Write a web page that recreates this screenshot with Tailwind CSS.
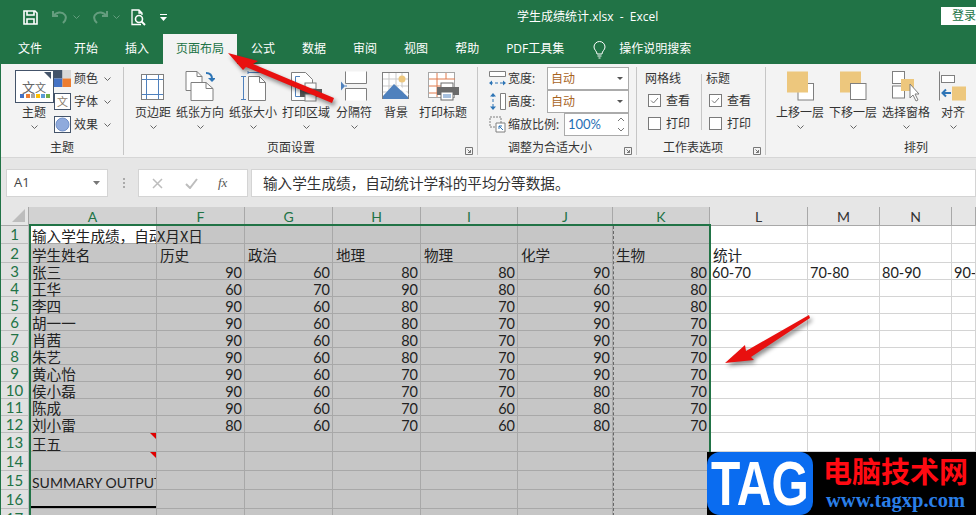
<!DOCTYPE html>
<html>
<head>
<meta charset="utf-8">
<title>学生成绩统计.xlsx - Excel</title>
<script src="https://cdn.jsdelivr.net/npm/@tailwindcss/browser@4"></script>
</head>
<body class="overflow-hidden">
<div class="relative w-[976px] h-[515px] overflow-hidden border-l border-[#217346] bg-white text-[12px] text-[#333] font-['Open_Sans','Noto_Sans_CJK_SC',sans-serif]">

  <!-- title bar -->
  <div class="relative flex items-center h-[34px] bg-[#217346] text-white">
    <svg class="ml-[22px]" width="15" height="15" viewBox="0 0 15 15" fill="none" stroke="#fff" stroke-width="1.6"><path d="M1 1h11l2 2v11H1z"/><path d="M4 1v4h7V1M4 14V9h7v5"/></svg>
    <svg class="ml-[14px] opacity-30" width="16" height="14" viewBox="0 0 16 14" fill="none" stroke="#fff" stroke-width="2"><path d="M1 1v5h5M1.5 6C4 2 10 1 13 5c2 3 0 6-2 8"/></svg>
    <svg class="ml-[5px] opacity-30" width="7" height="4" viewBox="0 0 7 4" fill="none" stroke="#fff"><path d="M.5.5l3 3 3-3"/></svg>
    <svg class="ml-[12px] opacity-30" width="16" height="14" viewBox="0 0 16 14" fill="none" stroke="#fff" stroke-width="2"><path d="M15 1v5h-5M14.500 6C12 2 6 1 3 5c-2 3 0 6 2 8"/></svg>
    <svg class="ml-[5px] opacity-30" width="7" height="4" viewBox="0 0 7 4" fill="none" stroke="#fff"><path d="M.5.5l3 3 3-3"/></svg>
    <svg class="ml-[11px]" width="16" height="17" viewBox="0 0 16 17" fill="none" stroke="#fff" stroke-width="1.3"><path d="M10 15.500H1V1h7l3 3v2M8 1v3h3"/><circle cx="8" cy="10" r="3.500" stroke-width="1.600"/><path d="M10.500 12.500l3.500 3.500" stroke-width="2"/></svg>
    <svg class="ml-[13px]" width="7" height="7" viewBox="0 0 7 7" fill="#fff"><path d="M0 0h7v1H0zM0 3h7L3.500 7z"/></svg>
    <span class="absolute left-[516px] top-[9px] leading-[16px] whitespace-pre">学生成绩统计.xlsx  -  Excel</span>
    <span class="absolute left-[940px] top-[7px] w-[40px] h-[18px] bg-white text-[#217346] pl-[11px] leading-[18px]">登录</span>
  </div>

  <!-- tabs -->
  <div class="flex h-[30px] bg-[#217346] text-white leading-[30px]">
    <div class="ml-[4px] px-[13px]">文件</div>
    <div class="ml-[6px] px-[13px]">开始</div>
    <div class="ml-[1px] px-[13px]">插入</div>
    <div class="ml-[1px] px-[13px] bg-[#f3f3f3] text-[#217346]">页面布局</div>
    <div class="ml-[1px] px-[13px]">公式</div>
    <div class="ml-[1px] px-[13px]">数据</div>
    <div class="ml-[1px] px-[13px]">审阅</div>
    <div class="ml-[1px] px-[13px]">视图</div>
    <div class="ml-[1px] px-[13px]">帮助</div>
    <div class="ml-[1px] px-[13px]">PDF工具集</div>
    <svg class="ml-[16px] mt-[7px]" width="13" height="18" viewBox="0 0 13 18" fill="none" stroke="#fff"><path d="M4 13c0-3-3-4-3-7a5.500 5.500 0 0 1 11 0c0 3-3 4-3 7zM4.500 15h4M5.500 17h2"/></svg>
    <div class="ml-[13px]">操作说明搜索</div>
  </div>

  <!-- ribbon -->
  <div class="flex h-[94px] pt-[3px] pb-[2px] bg-[#f3f3f3] border-b border-[#d6d6d6]">

    <!-- 主题 -->
    <div class="flex flex-col w-[123px] border-r border-[#c6c6c6]">
      <div class="flex flex-1 pl-[13px]">
        <div class="flex flex-col items-center w-[40px]">
          <svg class="mt-[3px]" width="39" height="33" viewBox="0 0 39 33"><rect x=".5" y=".5" width="38" height="32" fill="#fff" stroke="#44546a"/><path d="M29 2h7v7z" fill="#44546a"/><text x="7" y="22" font-size="13" fill="#666" font-family="Noto Sans CJK SC">文</text><text x="20" y="22" font-size="11" fill="#666" font-family="Noto Sans CJK SC">文</text><rect x="5" y="24" width="4" height="4" fill="#4472c4"/><rect x="11" y="24" width="4" height="4" fill="#ed7d31"/><rect x="16" y="24" width="4" height="4" fill="#a5a5a5"/><rect x="21" y="24" width="4" height="4" fill="#ffc000"/><rect x="26" y="24" width="4" height="4" fill="#5b9bd5"/><rect x="31" y="24" width="4" height="4" fill="#70ad47"/></svg>
          <div class="mt-[2px] leading-[16px]">主题</div>
          <svg class="mt-[4px]" width="7" height="4" viewBox="0 0 7 4" fill="none" stroke="#666"><path d="M.5.5l3 3 3-3"/></svg>
        </div>
        <div class="flex flex-col">
          <div class="flex items-center h-[23px]">
            <svg width="17" height="17" viewBox="0 0 17 17"><rect width="8.500" height="8.500" fill="#44546a"/><rect x="8.500" width="8.500" height="8.500" fill="#d9d9d9"/><rect y="8.500" width="8.500" height="8.500" fill="#4472c4"/><rect x="8.500" y="8.500" width="8.500" height="8.500" fill="#ed7d31"/></svg>
            <span class="ml-[3px]">颜色</span>
            <svg class="ml-[6px]" width="7" height="4" viewBox="0 0 7 4" fill="none" stroke="#666"><path d="M.5.5l3 3 3-3"/></svg>
          </div>
          <div class="flex items-center h-[23px]">
            <svg width="17" height="17" viewBox="0 0 17 17"><rect x=".5" y=".5" width="16" height="16" fill="#fff" stroke="#44546a"/><text x="3" y="13" font-size="11" fill="#8a7a6a" font-family="Noto Sans CJK SC">文</text></svg>
            <span class="ml-[3px]">字体</span>
            <svg class="ml-[6px]" width="7" height="4" viewBox="0 0 7 4" fill="none" stroke="#666"><path d="M.5.5l3 3 3-3"/></svg>
          </div>
          <div class="flex items-center h-[23px]">
            <svg width="17" height="17" viewBox="0 0 17 17"><rect x=".5" y=".5" width="16" height="16" fill="#fff" stroke="#44546a"/><circle cx="8.500" cy="8.500" r="6.500" fill="#8faadc" stroke="#6f8fc9"/></svg>
            <span class="ml-[3px]">效果</span>
            <svg class="ml-[6px]" width="7" height="4" viewBox="0 0 7 4" fill="none" stroke="#666"><path d="M.5.5l3 3 3-3"/></svg>
          </div>
        </div>
      </div>
      <div class="text-center leading-[14px]">主题</div>
    </div>

    <!-- 页面设置 -->
    <div class="relative flex flex-col w-[354px] border-r border-[#c6c6c6]">
      <div class="flex flex-1 pl-[11px]">
        <div class="flex flex-col items-center w-[36px]">
          <svg class="mt-[2px] mb-[2px] h-[34px]" width="24" height="28" viewBox="0 0 24 28" fill="#fff"><rect x=".5" y="2.500" width="22" height="25" stroke="#7f7f7f"/><path d="M5.500 3v24M17.500 3v24M1 7.500h21M1 22.500h21" stroke="#4f81bd" fill="none"/></svg>
          <div class="leading-[16px] whitespace-nowrap">页边距</div>
          <svg class="mt-[4px]" width="7" height="4" viewBox="0 0 7 4" fill="none" stroke="#666"><path d="M.5.5l3 3 3-3"/></svg>
        </div>
        <div class="flex flex-col items-center w-[48px] ml-[5px]">
          <svg class="mt-[2px] mb-[2px] h-[34px]" width="30" height="30" viewBox="0 0 30 30" fill="#fff" stroke="#7f7f7f"><path d="M1 .5h11l5 5v14H1z"/><path d="M6 11.500h15l7 6v12H6z"/><path d="M21 11.500v6h7M12 .5v5h5" fill="none"/><path d="M21 2c4 0 6 2 6 6" fill="none" stroke="#2e75b6" stroke-width="2"/><path d="M23 7h8l-4 4z" fill="#2e75b6" stroke="none"/></svg>
          <div class="leading-[16px] whitespace-nowrap">纸张方向</div>
          <svg class="mt-[4px]" width="7" height="4" viewBox="0 0 7 4" fill="none" stroke="#666"><path d="M.5.5l3 3 3-3"/></svg>
        </div>
        <div class="flex flex-col items-center w-[48px] ml-[5px]">
          <svg class="mt-[2px] mb-[2px] h-[34px]" width="25" height="30" viewBox="0 0 25 30" fill="#fff"><path d="M7 1.500h18M2.500 5v24M0 5.500h5M0 28.500h5M7 0v3M24.500 0v3" stroke="#4f81bd" fill="none"/><path d="M7.500 5.500h11l6 6v18h-17z" stroke="#7f7f7f"/><path d="M18.500 5.500v6h6" stroke="#7f7f7f" fill="none"/></svg>
          <div class="leading-[16px] whitespace-nowrap">纸张大小</div>
          <svg class="mt-[4px]" width="7" height="4" viewBox="0 0 7 4" fill="none" stroke="#666"><path d="M.5.5l3 3 3-3"/></svg>
        </div>
        <div class="flex flex-col items-center w-[48px] ml-[5px]">
          <svg class="mt-[2px] mb-[2px] h-[34px]" width="31" height="30" viewBox="0 0 31 30" fill="#fff"><path d="M.5 1.500h14l7 7v21H.5z" stroke="#7f7f7f"/><path d="M9 5.500H4.500v20H9" stroke="#4f81bd" fill="none"/><rect x="14" y="12" width="11" height="6" stroke="#7f7f7f"/><path d="M9 18h22v8H9z" fill="#5a5a5a"/><rect x="14" y="23" width="11" height="7" stroke="#7f7f7f"/></svg>
          <div class="leading-[16px] whitespace-nowrap">打印区域</div>
          <svg class="mt-[4px]" width="7" height="4" viewBox="0 0 7 4" fill="none" stroke="#666"><path d="M.5.5l3 3 3-3"/></svg>
        </div>
        <div class="flex flex-col items-center w-[36px] ml-[6px]">
          <svg class="mt-[2px] mb-[2px] h-[34px]" width="26" height="29" viewBox="0 0 26 29" fill="#fff" stroke="#7f7f7f"><path d="M4.500 0v12h21V0M4.500 29V17h21v12"/><path d="M0 10l4 4.500L0 19z" fill="#4f81bd" stroke="none"/><path d="M4 14.500h2" stroke="#4f81bd"/></svg>
          <div class="leading-[16px] whitespace-nowrap">分隔符</div>
          <svg class="mt-[4px]" width="7" height="4" viewBox="0 0 7 4" fill="none" stroke="#666"><path d="M.5.5l3 3 3-3"/></svg>
        </div>
        <div class="flex flex-col items-center w-[24px] ml-[12px]">
          <svg class="mt-[2px] mb-[2px] h-[34px] shrink-0" width="28" height="28" viewBox="0 0 28 28"><rect x=".5" y=".5" width="26" height="26" fill="#fff" stroke="#7f7f7f"/><path d="M7 1v25M14 1v25M20 1v25M1 7h25M1 14h25M1 20h25" stroke="#c9c9c9"/><circle cx="20" cy="7" r="3.500" fill="#edc77d"/><path d="M1 24l11-12 14 13v2H1z" fill="#4f81bd"/><path d="M17 14l9 9" stroke="#fff" stroke-width="2"/></svg>
          <div class="leading-[16px] whitespace-nowrap">背景</div>
        </div>
        <div class="flex flex-col items-center w-[48px] ml-[11px]">
          <svg class="mt-[2px] mb-[2px] h-[34px]" width="31" height="28" viewBox="0 0 31 28"><rect x=".5" y=".5" width="26" height="25" fill="#fff" stroke="#a6a6a6"/><path d="M1 7h26M9 1v6M18 1v6M9 7v18M1 14h12M1 21h8" stroke="#e07b4c" fill="none"/><rect x="13" y="11" width="12" height="6" fill="#fff" stroke="#6b6b6b"/><rect x="9" y="15" width="22" height="8" fill="#6b6b6b"/><rect x="13" y="20" width="12" height="8" fill="#fff" stroke="#6b6b6b"/><path d="M15 23h8M15 25h8" stroke="#4f81bd"/></svg>
          <div class="leading-[16px] whitespace-nowrap">打印标题</div>
        </div>
      </div>
      <div class="text-center leading-[14px] pr-[19px]">页面设置</div>
      <svg class="absolute right-[4px] bottom-0" width="8" height="8" viewBox="0 0 8 8" fill="none" stroke="#777"><path d="M.5 7.500v-7h7v7zM2.500 2.500l3 3M5.500 3v2.500H3"/></svg>
    </div>

    <!-- 调整为合适大小 -->
    <div class="relative flex flex-col w-[159px] border-r border-[#c6c6c6]">
      <div class="flex-1 pl-[11px]">
        <div class="flex items-center h-[23px]">
          <svg width="17" height="17" viewBox="0 0 17 17" fill="none" stroke="#7f7f7f"><path d="M.5 1.500h16v5h-16z" fill="#fff"/><path d="M1 13h15" stroke="#2e75b6" stroke-dasharray="3 2"/><path d="M0 13l3-2.500v5zM17 13l-3-2.500v5z" fill="#2e75b6" stroke="none"/></svg>
          <span class="ml-[2px] w-[39px]">宽度:</span>
          <div class="flex items-center justify-between w-[82px] h-[23px] pl-[3px] pr-[5px] bg-white border border-[#ababab] text-[#a9651f]">自动<svg width="6" height="3" viewBox="0 0 6 3" fill="#555"><path d="M0 0h6L3 3z"/></svg></div>
        </div>
        <div class="flex items-center h-[23px]">
          <svg width="17" height="17" viewBox="0 0 17 17" fill="none" stroke="#7f7f7f"><path d="M11.500.5h5v16h-5z" fill="#fff"/><path d="M4 1v15" stroke="#2e75b6" stroke-dasharray="3 2"/><path d="M4 0l-3 3.500h6zM4 17l-3-3.500h6z" fill="#2e75b6" stroke="none"/></svg>
          <span class="ml-[2px] w-[39px]">高度:</span>
          <div class="flex items-center justify-between w-[82px] h-[23px] pl-[3px] pr-[5px] bg-white border border-[#ababab] text-[#a9651f]">自动<svg width="6" height="3" viewBox="0 0 6 3" fill="#555"><path d="M0 0h6L3 3z"/></svg></div>
        </div>
        <div class="flex items-center h-[23px]">
          <svg width="17" height="17" viewBox="0 0 17 17" fill="none" stroke="#7f7f7f"><path d="M1 1h11v10H1z" stroke-dasharray="2 1"/><path d="M7 7h9v9H7z" fill="#fff"/><path d="M14 14l-4-4M10 13v-3h3" stroke="#2e75b6"/></svg>
          <span class="ml-[2px] w-[56px] whitespace-nowrap">缩放比例:</span>
          <div class="flex items-center justify-between w-[65px] h-[23px] pl-[3px] pr-[3px] bg-white border border-[#ababab] text-[#1f6fb5] text-[13px] font-['Lato']">100%<svg width="8" height="15" viewBox="0 0 8 15" fill="none" stroke="#777"><path d="M1 4l3-3 3 3M1 11l3 3 3-3"/></svg></div>
        </div>
      </div>
      <div class="text-center leading-[14px] pr-[14px]">调整为合适大小</div>
      <svg class="absolute right-[4px] bottom-0" width="8" height="8" viewBox="0 0 8 8" fill="none" stroke="#777"><path d="M.5 7.500v-7h7v7zM2.500 2.500l3 3M5.500 3v2.500H3"/></svg>
    </div>

    <!-- 工作表选项 -->
    <div class="relative flex flex-col w-[129px] border-r border-[#c6c6c6]">
      <div class="flex flex-1">
        <div class="w-[64px] pl-[8px] mt-[2px]">
          <div class="h-[20px] leading-[20px]">网格线</div>
          <div class="flex items-center h-[23px] pl-[3px]"><svg width="13" height="13" viewBox="0 0 13 13"><rect x=".5" y=".5" width="12" height="12" fill="#fff" stroke="#7a7a7a"/><path d="M3 6.500l2.500 2.500L10 4" fill="none" stroke="#7a7a7a"/></svg><span class="ml-[5px]">查看</span></div>
          <div class="flex items-center h-[23px] pl-[3px]"><svg width="13" height="13" viewBox="0 0 13 13"><rect x=".5" y=".5" width="12" height="12" fill="#fff" stroke="#7a7a7a"/></svg><span class="ml-[5px]">打印</span></div>
        </div>
        <div class="h-[56px] mt-[7px] border-l border-[#c6c6c6]"></div>
        <div class="pl-[4px] mt-[2px]">
          <div class="h-[20px] leading-[20px]">标题</div>
          <div class="flex items-center h-[23px] pl-[3px]"><svg width="13" height="13" viewBox="0 0 13 13"><rect x=".5" y=".5" width="12" height="12" fill="#fff" stroke="#7a7a7a"/><path d="M3 6.500l2.500 2.500L10 4" fill="none" stroke="#7a7a7a"/></svg><span class="ml-[5px]">查看</span></div>
          <div class="flex items-center h-[23px] pl-[3px]"><svg width="13" height="13" viewBox="0 0 13 13"><rect x=".5" y=".5" width="12" height="12" fill="#fff" stroke="#7a7a7a"/></svg><span class="ml-[5px]">打印</span></div>
        </div>
      </div>
      <div class="text-center leading-[14px] pr-[16px]">工作表选项</div>
      <svg class="absolute right-[4px] bottom-0" width="8" height="8" viewBox="0 0 8 8" fill="none" stroke="#777"><path d="M.5 7.500v-7h7v7zM2.500 2.500l3 3M5.500 3v2.500H3"/></svg>
    </div>

    <!-- 排列 -->
    <div class="flex flex-col flex-1">
      <div class="flex flex-1 pl-[10px]">
        <div class="flex flex-col items-center w-[48px]">
          <svg class="mt-[2px] mb-[2px] h-[34px]" width="27" height="29" viewBox="0 0 27 29"><rect x="11" y="12" width="15.500" height="16.500" fill="#fff" stroke="#7f7f7f"/><rect width="21" height="21" fill="#edc77d"/></svg>
          <div class="leading-[16px] whitespace-nowrap">上移一层</div>
          <svg class="mt-[4px]" width="7" height="4" viewBox="0 0 7 4" fill="none" stroke="#666"><path d="M.5.5l3 3 3-3"/></svg>
        </div>
        <div class="flex flex-col items-center w-[48px] ml-[5px]">
          <svg class="mt-[2px] mb-[2px] h-[34px]" width="27" height="29" viewBox="0 0 27 29"><rect width="21" height="21" fill="#edc77d"/><rect x="10.500" y="12" width="15.500" height="16" fill="#fff" stroke="#7f7f7f"/></svg>
          <div class="leading-[16px] whitespace-nowrap">下移一层</div>
          <svg class="mt-[4px]" width="7" height="4" viewBox="0 0 7 4" fill="none" stroke="#666"><path d="M.5.5l3 3 3-3"/></svg>
        </div>
        <div class="flex flex-col items-center w-[48px] ml-[5px]">
          <svg class="mt-[2px] mb-[2px] h-[34px]" width="28" height="30" viewBox="0 0 28 30"><rect x=".5" y=".5" width="12" height="12" fill="#fff" stroke="#7f7f7f"/><rect x=".5" y="15" width="12" height="12" fill="#fff" stroke="#7f7f7f"/><rect x="9" y="8" width="13" height="12" fill="#edc77d"/><path d="M18 13v14l3-3 3 6 2-1-3-6h4z" fill="#fff" stroke="#7f7f7f"/></svg>
          <div class="leading-[16px] whitespace-nowrap">选择窗格</div>
          <svg class="mt-[4px]" width="7" height="4" viewBox="0 0 7 4" fill="none" stroke="#666"><path d="M.5.5l3 3 3-3"/></svg>
        </div>
        <div class="flex flex-col items-center w-[24px] ml-[11px]">
          <svg class="mt-[2px] mb-[2px] h-[34px] shrink-0" width="28" height="29" viewBox="0 0 28 29"><path d="M.5 0v29" stroke="#7f7f7f"/><rect x="2.500" y="4" width="13" height="7" fill="#fff" stroke="#7f7f7f"/><rect x="13" y="15" width="14" height="14" fill="#edc77d"/><path d="M4 21.500h8M7 18l-3.500 3.500L7 25" fill="none" stroke="#2e75b6" stroke-width="2"/></svg>
          <div class="leading-[16px] whitespace-nowrap">对齐</div>
          <svg class="mt-[4px]" width="7" height="4" viewBox="0 0 7 4" fill="none" stroke="#666"><path d="M.5.5l3 3 3-3"/></svg>
        </div>
      </div>
      <div class="text-center leading-[14px] pl-[90px]">排列</div>
    </div>
  </div>

  <!-- formula bar -->
  <div class="flex items-center h-[49px] pl-[5px] pt-[1px] bg-[#e6e6e6]">
    <div class="flex items-center justify-between w-[102px] h-[28px] pl-[7px] pr-[7px] bg-white border border-[#d4d4d4] text-[13px] text-[#444]">A1<svg width="7" height="4" viewBox="0 0 7 4" fill="#777"><path d="M0 0h7L3.500 4z"/></svg></div>
    <svg class="ml-[15px]" width="3" height="11" viewBox="0 0 3 11" fill="#aaa"><rect width="2" height="2"/><rect y="4" width="2" height="2"/><rect y="8" width="2" height="2"/></svg>
    <div class="flex items-center w-[110px] h-[28px] ml-[12px] bg-white border border-[#d4d4d4]">
      <svg class="ml-[13px]" width="11" height="11" viewBox="0 0 11 11" fill="none" stroke="#bdbdbd" stroke-width="1.500"><path d="M1 1l9 9M10 1l-9 9"/></svg>
      <svg class="ml-[22px]" width="13" height="11" viewBox="0 0 13 11" fill="none" stroke="#bdbdbd" stroke-width="2"><path d="M1 6l4 4 7-9"/></svg>
      <span class="ml-[20px] font-['Liberation_Serif'] italic text-[13px] text-[#555]">fx</span>
    </div>
    <div class="flex items-center flex-1 h-[28px] ml-[3px] pl-[11px] bg-white border border-[#d4d4d4] text-[14.600px] text-[#333] font-['Noto_Sans_CJK_SC']">输入学生成绩，自动统计学科的平均分等数据。</div>
  </div>

  <!-- sheet -->
  <div class="relative">
    <div id="sheet" class="grid grid-cols-[28px_128px_88px_88px_88px_97px_95px_97px_98px_72px_72px_24px] grid-rows-[19px_18px_19px_repeat(10,17px)_repeat(4,19px)_20px]"></div>
    <div class="absolute z-20 left-[28px] top-[17px] w-[682px] h-[320px] border-2 border-[#217346] pointer-events-none"></div>
    <div class="absolute z-20 left-[612px] top-[19px] h-[290px] border-l border-dashed border-[#666] pointer-events-none"></div>
  </div>

  <!-- watermark -->
  <div class="absolute z-30 left-[706px] top-[452px] flex w-[270px] h-[63px] bg-black">
    <div class="flex items-center justify-center w-[106px] h-[63px] rounded-[13px] bg-[#0a6cf0] text-white text-[48px] font-bold font-['Liberation_Sans']"><span class="scale-y-[1.3]">TAG</span></div>
    <div class="flex flex-col items-center ml-[10px]">
      <div class="text-[29px] leading-[36px] font-bold text-[#ff0a12] font-['Noto_Sans_CJK_SC']">电脑技术网</div>
      <div class="text-[20.500px] leading-[24px] font-bold text-[#2a7fe8] font-['Liberation_Serif']">www.tagxp.com</div>
    </div>
  </div>

  <!-- annotation arrows -->
  <svg class="absolute z-30 left-0 top-0 pointer-events-none drop-shadow-[2px_3px_2px_rgba(0,0,0,0.45)]" width="976" height="515" viewBox="0 0 976 515" fill="#e8100f">
    <path d="M227 53l30 8-5 3 81 34-2 5-86-36-3 3z"/>
    <path d="M724 363l20-18 1 6 63-36 1 3-59 39 3 3z"/>
  </svg>
</div>

<script>
  var cols = ['A', 'F', 'G', 'H', 'I', 'J', 'K', 'L', 'M', 'N', ''];
  var heads = ['学生姓名', '历史', '政治', '地理', '物理', '化学', '生物', '统计'];
  var marks = [
    ['张三', 90, 60, 80, 80, 90, 80], ['王华', 60, 70, 90, 80, 60, 80], ['李四', 90, 60, 80, 70, 90, 80],
    ['胡一一', 90, 60, 80, 70, 90, 70], ['肖茜', 90, 60, 80, 70, 90, 70], ['朱艺', 90, 60, 80, 70, 90, 70],
    ['黄心怡', 90, 60, 70, 70, 90, 70], ['侯小磊', 90, 60, 70, 70, 80, 70], ['陈成', 90, 60, 70, 60, 80, 70],
    ['刘小雷', 80, 60, 70, 60, 80, 70]
  ];
  var cjk = "relative z-10 text-[14.600px] font-['Noto_Sans_CJK_SC'] text-[#222] -mb-[1px]";
  var num = "relative z-10 text-[14.500px] font-['Lato'] text-[#222] -mb-[2px]";
  var html = '<div class="bg-[#e6e6e6] border-b border-r border-[#a8a8a8] relative"><svg class="absolute right-[3px] bottom-[3px]" width="13" height="13" viewBox="0 0 13 13" fill="#bdbdbd"><path d="M13 0v13H0z"/></svg></div>';

  // column headers
  for (var c = 0; c < cols.length; c++) {
    if (c < 7) html += '<div class="flex items-center justify-center bg-[#d2d2d2] border-r border-b border-[#a8a8a8] text-[14px] text-[#217346] font-[\'Lato\']">' + cols[c] + '</div>';
    else html += '<div class="flex items-center justify-center bg-[#e6e6e6] border-r border-b border-[#a8a8a8] text-[14px] text-[#333] font-[\'Lato\']">' + cols[c] + '</div>';
  }

  for (var r = 1; r <= 17; r++) {
    html += '<div class="flex items-center justify-center bg-[#e1e1e1] border-r border-b border-[#bdbdbd] text-[15px] text-[#217346] font-[\'Lato\']">' + r + '</div>';
    for (var c = 0; c < cols.length; c++) {
      var box = c < 7
        ? 'relative flex items-end overflow-x-clip whitespace-nowrap bg-[#c6c6c6] border-r border-b border-[#a8a8a8] '
        : 'relative flex items-end overflow-x-clip whitespace-nowrap bg-white border-r border-b border-[#d4d4d4] ';
      var text = '', cls = cjk + ' pl-[3px] leading-[17px]';
      if (r == 1 && c == 0) { box = 'relative flex items-end overflow-x-clip whitespace-nowrap bg-white border-r border-b border-[#a8a8a8] '; text = '输入学生成绩，自动'; }
      if (r == 1 && c == 1) { text = 'X月X日'; cls = cjk + ' leading-[17px]'; }
      if (r == 2 && heads[c]) text = heads[c];
      if (r >= 3 && r <= 12 && c == 0) text = marks[r - 3][0];
      if (r >= 3 && r <= 12 && c > 0 && c < 7) { text = marks[r - 3][c]; box += 'justify-end '; cls = num + ' pr-[2px] leading-[17px]'; }
      if (r == 3 && c >= 7) { text = ['60-70', '70-80', '80-90', '90-100'][c - 7]; cls = num + ' pl-[2px] leading-[17px]'; }
      if (r == 13 && c == 0) text = '王五';
      if (r == 15 && c == 0) { text = 'SUMMARY OUTPUT'; cls = "relative z-10 text-[14px] font-['Lato'] text-[#222] pl-[3px] leading-[19px] -mb-[3px]"; }
      var extra = '';
      if ((r == 13 || r == 14) && c == 0) extra = '<svg class="absolute right-0 top-0" width="6" height="6" viewBox="0 0 6 6" fill="#e00000"><path d="M0 0h6v6z"/></svg>';
      if (r == 16 && c == 0) extra = '<div class="absolute left-[2px] right-0 bottom-0 h-[2px] bg-black"></div>';
      html += '<div class="' + box + '">' + (text !== '' ? '<span class="' + cls + '">' + text + '</span>' : '') + extra + '</div>';
    }
  }
  document.getElementById('sheet').innerHTML = html;
</script>
</body>
</html>
